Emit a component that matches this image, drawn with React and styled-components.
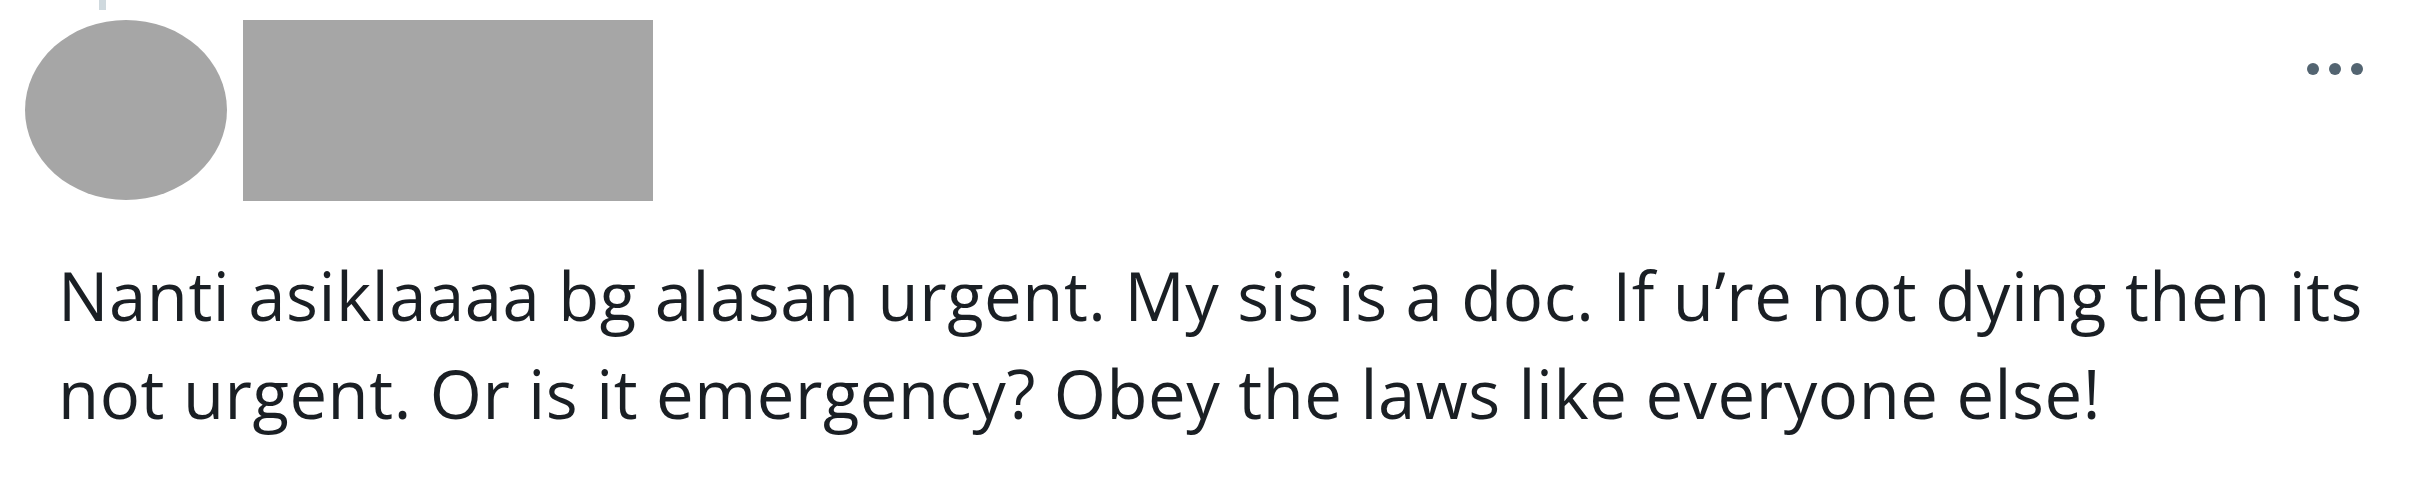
import styled, { createGlobalStyle } from "styled-components";

const GlobalStyle = createGlobalStyle`
  html, body {
    margin: 0;
    padding: 0;
    background: #ffffff;
  }
`;

const Tweet = styled.article`
  position: relative;
  width: 2417px;
  height: 486px;
  box-sizing: border-box;
  padding: 20px 0 0 25px;
  background: #ffffff;
  font-family: "Open Sans", "Noto Sans", sans-serif;
  color: #1a1f24;
  overflow: hidden;
`;

const ThreadLine = styled.div`
  position: absolute;
  top: 0;
  left: 99px;
  width: 7px;
  height: 10px;
  background: #cfd9de;
`;

const Header = styled.header`
  display: flex;
  align-items: flex-start;
  gap: 16px;
`;

const Avatar = styled.div`
  width: 202px;
  height: 180px;
  border-radius: 50%;
  background: #a6a6a6;
  flex-shrink: 0;
`;

const NameBlock = styled.div`
  width: 410px;
  height: 181px;
  background: #a6a6a6;
`;

const MoreButton = styled.button`
  margin-left: auto;
  margin-right: 54px;
  margin-top: 43px;
  display: flex;
  gap: 10px;
  padding: 0;
  border: none;
  background: none;
`;

const Dot = styled.span`
  width: 12px;
  height: 12px;
  border-radius: 50%;
  background: #536471;
`;

const Body = styled.p`
  margin: 45px 0 0 0;
  padding-left: 33px;
  font-size: 67px;
  line-height: 98px;
  letter-spacing: 0.55px;
  white-space: pre-line;
`;

export default function App() {
  return (
    <>
      <GlobalStyle />
      <Tweet>
        <ThreadLine />
        <Header>
          <Avatar />
          <NameBlock />
          <MoreButton aria-label="More">
            <Dot />
            <Dot />
            <Dot />
          </MoreButton>
        </Header>
        <Body>
          {"Nanti asiklaaaa bg alasan urgent. My sis is a doc. If u’re not dying then its\nnot urgent. Or is it emergency? Obey the laws like everyone else!"}
        </Body>
      </Tweet>
    </>
  );
}
